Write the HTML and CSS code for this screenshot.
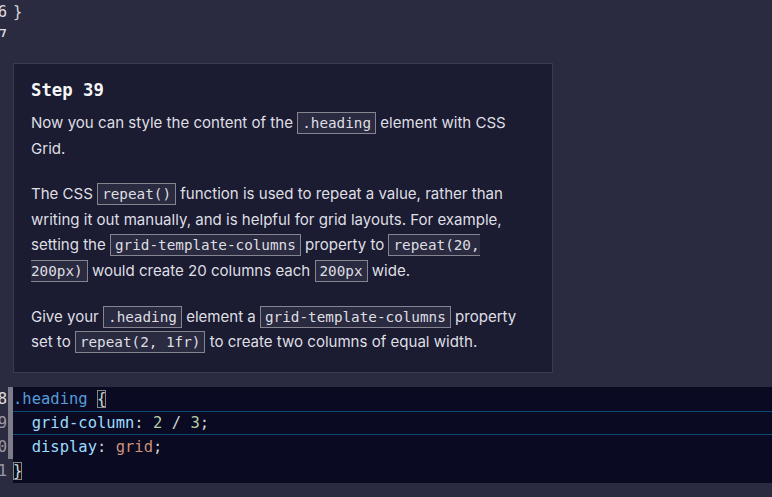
FILE: index.html
```html
<!DOCTYPE html>
<html lang="en">
<head>
<meta charset="utf-8">
<title>Step 39</title>
<link rel="stylesheet" href="styles.css">
</head>
<body>
<div class="editor-top">
  <div class="line"><span class="ln">36</span><span class="gut"></span><span class="code"><span class="p">}</span></span></div>
  <div class="line"><span class="ln">37</span><span class="gut"></span><span class="code"></span></div>
</div>

<section class="card">
  <h2 class="step">Step 39</h2>
  <p>Now you can style the content of the <code>.heading</code> element with CSS Grid.</p>
  <p>The CSS <code>repeat()</code> function is used to repeat a value, rather than writing it out manually, and is helpful for grid layouts. For example, setting the <code>grid-template-columns</code> property to <code>repeat(20, 200px)</code> would create 20 columns each <code>200px</code> wide.</p>
  <p>Give your <code>.heading</code> element a <code>grid-template-columns</code> property set to <code>repeat(2, 1fr)</code> to create two columns of equal width.</p>
</section>

<div class="editor-region">
  <div class="line"><span class="ln active">38</span><span class="gut mark"></span><span class="code"><span class="sel">.heading</span> <span class="p bm">{</span></span></div>
  <div class="line current"><span class="ln">39</span><span class="gut mark"></span><span class="code">  <span class="prop">grid-column</span><span class="p">:</span> <span class="num">2</span> <span class="p">/</span> <span class="num">3</span><span class="p">;</span></span></div>
  <div class="line"><span class="ln">40</span><span class="gut mark"></span><span class="code">  <span class="prop">display</span><span class="p">:</span> <span class="str">grid</span><span class="p">;</span></span></div>
  <div class="line"><span class="ln">41</span><span class="gut"></span><span class="code"><span class="p bm">}</span></span></div>
</div>
</body>
</html>
```

FILE: styles.css
```css
html, body {
  margin: 0;
  padding: 0;
}

body {
  background: #2a2a40;
  width: 772px;
  height: 497px;
  overflow: hidden;
  font-family: "DejaVu Sans Mono", monospace;
}

.line {
  display: flex;
  height: 24px;
  line-height: 24px;
  font-family: "DejaVu Sans Mono", monospace;
  font-size: 15.5px;
  white-space: pre;
}

.ln {
  width: 40px;
  margin-left: -33px;
  padding-right: 1px;
  text-align: right;
  color: #9a9aa6;
  flex: none;
}

.ln.active {
  color: #dfdfe2;
}

.editor-top .ln {
  color: #dfdfe2;
}

.gut {
  width: 5px;
  flex: none;
}

.gut.mark {
  background: #7c7c8a;
}

.code {
  flex: 1;
  color: #d4d4d4;
}

.editor-top {
  height: 37px;
  overflow: hidden;
}

.editor-top .code {
  color: #dfdfe2;
}

.editor-region {
  margin-top: 14px;
}

.editor-region .code {
  background: #0a0a23;
}

.line.current .code {
  box-shadow: inset 0 1px 0 #0b4a72, inset 0 -1px 0 #0b4a72;
}

.sel { color: #569cd6; }
.prop { color: #9cdcfe; }
.num { color: #b5cea8; }
.str { color: #ce9178; }
.p { color: #d4d4d4; }

.bm {
  outline: 1px solid #888888;
  outline-offset: -1px;
  background: rgba(0, 100, 0, 0.1);
}

.card {
  margin: 26px 0 0 13px;
  width: 505px;
  padding: 10px 16px 17px 17px;
  background: #1b1b32;
  border: 1px solid #3b3b4f;
  color: #dfdfe2;
  font-family: Inter, "Noto Sans", sans-serif;
  font-size: 15.05px;
}

.step {
  margin: 0 0 4px;
  font-family: "DejaVu Sans Mono", monospace;
  font-size: 17.3px;
  font-weight: bold;
  line-height: 32px;
  color: #f5f6f7;
}

.card p {
  margin: 0 0 20px;
  line-height: 25.6px;
}

.card p:last-child {
  margin-bottom: 0;
}

code {
  font-family: "DejaVu Sans Mono", monospace;
  font-size: 14.3px;
  line-height: 1;
  padding: 2px 4px;
  background: #2a2a40;
  border: 1px solid #858591;
  color: #dfdfe2;
}
```
